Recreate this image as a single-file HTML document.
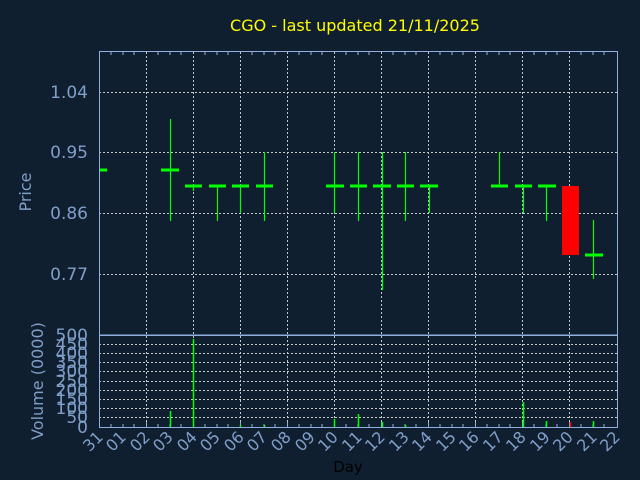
<!DOCTYPE html>
<html><head><meta charset="utf-8"><style>
html,body{margin:0;padding:0;background:#101f30;}
svg{display:block;font-family:"DejaVu Sans","Liberation Sans",sans-serif;}
</style></head><body>
<svg width="640" height="480" viewBox="0 0 640 480" xmlns="http://www.w3.org/2000/svg">
<rect width="640" height="480" fill="#101f30"/>
<text x="355" y="31" fill="#ffff00" font-size="16" text-anchor="middle">CGO - last updated 21/11/2025</text>
<g stroke="#c8c8c8" stroke-width="1" stroke-dasharray="2,2">
<line x1="99" y1="92.5" x2="617" y2="92.5"/><line x1="99" y1="152.5" x2="617" y2="152.5"/>
<line x1="99" y1="213.5" x2="617" y2="213.5"/><line x1="99" y1="274.5" x2="617" y2="274.5"/>
<line x1="146.5" y1="52" x2="146.5" y2="427"/><line x1="193.5" y1="52" x2="193.5" y2="427"/>
<line x1="240.5" y1="52" x2="240.5" y2="427"/><line x1="287.5" y1="52" x2="287.5" y2="427"/>
<line x1="334.5" y1="52" x2="334.5" y2="427"/><line x1="381.5" y1="52" x2="381.5" y2="427"/>
<line x1="428.5" y1="52" x2="428.5" y2="427"/><line x1="475.5" y1="52" x2="475.5" y2="427"/>
<line x1="522.5" y1="52" x2="522.5" y2="427"/><line x1="569.5" y1="52" x2="569.5" y2="427"/>
<line x1="99" y1="344.5" x2="617" y2="344.5"/><line x1="99" y1="353.5" x2="617" y2="353.5"/>
<line x1="99" y1="362.5" x2="617" y2="362.5"/><line x1="99" y1="371.5" x2="617" y2="371.5"/>
<line x1="99" y1="381.5" x2="617" y2="381.5"/><line x1="99" y1="390.5" x2="617" y2="390.5"/>
<line x1="99" y1="399.5" x2="617" y2="399.5"/><line x1="99" y1="408.5" x2="617" y2="408.5"/>
<line x1="99" y1="417.5" x2="617" y2="417.5"/>
</g>
<g stroke="#8fb0dc" stroke-width="1" fill="none">
<rect x="99.5" y="51.5" width="518" height="283.5"/>
<rect x="99.5" y="335.5" width="518" height="92"/>
<path d="M111 52v3M123 52v3M134 52v3M158 52v3M170 52v3M181 52v3M205 52v3M217 52v3M228 52v3M252 52v3M264 52v3M275 52v3M299 52v3M311 52v3M322 52v3M346 52v3M358 52v3M369 52v3M393 52v3M405 52v3M416 52v3M440 52v3M452 52v3M463 52v3M487 52v3M499 52v3M510 52v3M534 52v3M546 52v3M557 52v3M581 52v3M593 52v3M604 52v3"/>
<path d="M111 427v-3M123 427v-3M134 427v-3M158 427v-3M170 427v-3M181 427v-3M205 427v-3M217 427v-3M228 427v-3M252 427v-3M264 427v-3M275 427v-3M299 427v-3M311 427v-3M322 427v-3M346 427v-3M358 427v-3M369 427v-3M393 427v-3M405 427v-3M416 427v-3M440 427v-3M452 427v-3M463 427v-3M487 427v-3M499 427v-3M510 427v-3M534 427v-3M546 427v-3M557 427v-3M581 427v-3M593 427v-3M604 427v-3"/>
<path d="M146.5 427v-5M193.5 427v-5M240.5 427v-5M287.5 427v-5M334.5 427v-5M381.5 427v-5M428.5 427v-5M475.5 427v-5M522.5 427v-5M569.5 427v-5"/>
</g>
<g fill="#7f9fc8" font-size="17" text-anchor="end">
<text x="88" y="98">1.04</text><text x="88" y="158">0.95</text>
<text x="88" y="219">0.86</text><text x="88" y="280">0.77</text>
</g>
<text transform="translate(31,192) rotate(-90)" fill="#7f9fc8" font-size="16" text-anchor="middle">Price</text>
<text transform="translate(43,381) rotate(-90)" fill="#7f9fc8" font-size="16" text-anchor="middle">Volume (0000)</text>
<g fill="#7f9fc8" font-size="17" text-anchor="end">
<text x="88" y="341">500</text><text x="88" y="350">450</text><text x="88" y="359">400</text>
<text x="88" y="368">350</text><text x="88" y="377">300</text><text x="88" y="387">250</text>
<text x="88" y="396">200</text><text x="88" y="405">150</text><text x="88" y="414">100</text>
<text x="88" y="423">50</text><text x="88" y="433">0</text>
</g>
<g fill="#7f9fc8" font-size="16" text-anchor="end">
<text transform="translate(104,438) rotate(-45)">31</text>
<text transform="translate(127,438) rotate(-45)">01</text>
<text transform="translate(151,438) rotate(-45)">02</text>
<text transform="translate(174,438) rotate(-45)">03</text>
<text transform="translate(198,438) rotate(-45)">04</text>
<text transform="translate(221,438) rotate(-45)">05</text>
<text transform="translate(245,438) rotate(-45)">06</text>
<text transform="translate(268,438) rotate(-45)">07</text>
<text transform="translate(292,438) rotate(-45)">08</text>
<text transform="translate(316,438) rotate(-45)">09</text>
<text transform="translate(339,438) rotate(-45)">10</text>
<text transform="translate(363,438) rotate(-45)">11</text>
<text transform="translate(386,438) rotate(-45)">12</text>
<text transform="translate(410,438) rotate(-45)">13</text>
<text transform="translate(433,438) rotate(-45)">14</text>
<text transform="translate(457,438) rotate(-45)">15</text>
<text transform="translate(480,438) rotate(-45)">16</text>
<text transform="translate(504,438) rotate(-45)">17</text>
<text transform="translate(527,438) rotate(-45)">18</text>
<text transform="translate(551,438) rotate(-45)">19</text>
<text transform="translate(574,438) rotate(-45)">20</text>
<text transform="translate(598,438) rotate(-45)">21</text>
<text transform="translate(621,438) rotate(-45)">22</text>
</g>
<text x="348" y="472" fill="#000" font-size="15" text-anchor="middle">Day</text>
<g stroke="#00ff00" stroke-width="1.2">
<path d="M170.5 119v102M193.5 186v5M217.5 186v35M240.5 186v27M264.5 152v69M334.5 152v61M358.5 152v69M382.5 152v138M405.5 152v69M429.5 186v27M499.5 152v34M523.5 186v27M546.5 186v35M593.5 220v59"/>
</g>
<g stroke="#00ff00" stroke-width="3">
<path d="M100 170h7M161 170h18M185 186h17M209 186h17M232 186h17M256 186h17M326 186h18M350 186h17M373 186h18M397 186h17M420 186h18M491 186h17M515 186h17M538 186h18M585 255h18"/>
</g>
<rect x="562" y="186" width="17" height="69" fill="#ff0000"/>
<g stroke="#00ff00" stroke-width="1.5">
<path d="M170.5 427v-16M193.5 427v-88M240.5 427v-2M264.5 427v-2M334.5 427v-8M358.5 427v-13M382.5 427v-5M405.5 427v-2M523.5 427v-25M546.5 427v-6M593.5 427v-6"/>
</g>
<path d="M570.5 427v-5" stroke="#ff0000" stroke-width="1.5"/>
</svg>
</body></html>
